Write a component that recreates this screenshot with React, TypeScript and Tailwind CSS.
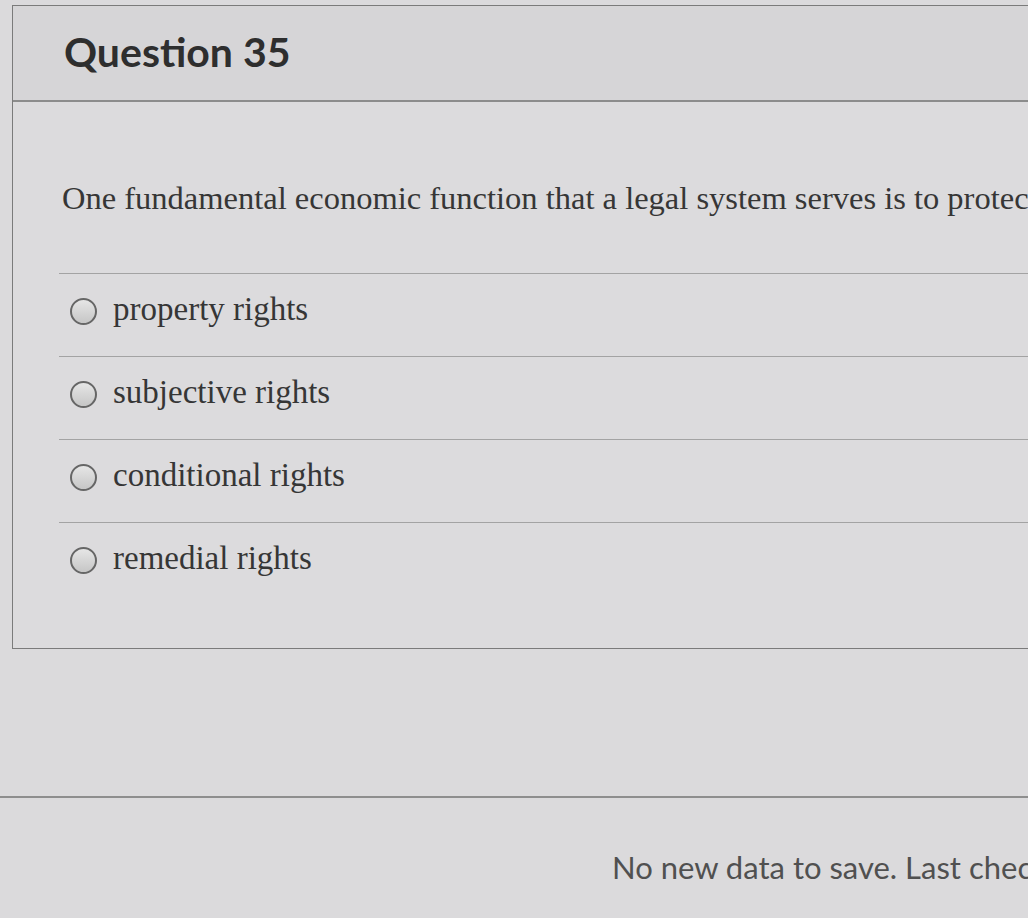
const options = ["property rights", "subjective rights", "conditional rights", "remedial rights"];

function Radio() {
  return (
    <span className="inline-block mt-[6px] w-[27px] h-[27px] shrink-0 rounded-full border-2 border-[#666] bg-gradient-to-b from-[#e6e6e6] to-[#c6c6c6]" />
  );
}

export default function App() {
  return (
    <div className="w-[1028px] h-[918px] overflow-hidden bg-[#dbdadc] pt-[5px]">
      <div className="ml-[12px] w-[1100px] border border-[#7b7b7b] bg-[#dcdbdd]">
        <div className="h-[96px] flex items-center pl-[51px] pb-[3px] bg-[#d6d5d7] border-b-2 border-[#8c8c8c]">
          <h2 className="text-[41px] font-bold text-[#2e2e2e] font-['Lato',sans-serif]">Question 35</h2>
        </div>
        <div className="pt-[77px] pb-[43px] font-['Liberation_Serif',serif] text-[#363636]">
          <p className="pl-[49px] text-[32.5px] leading-[38px] whitespace-nowrap">
            One fundamental economic function that a legal system serves is to protect
          </p>
          <div className="mt-[56px] ml-[46px]">
            {options.map((o) => (
              <div key={o} className="h-[83px] flex items-center gap-[16px] pl-[11px] pb-[13px] border-t border-[#a3a3a3]">
                <Radio />
                <span className="text-[33px] leading-[36px] whitespace-nowrap">{o}</span>
              </div>
            ))}
          </div>
        </div>
      </div>
      <div className="mt-[147px] border-t-2 border-[#8e8e8e]">
        <p className="pt-[46px] pl-[612px] text-[31px] text-[#505050] whitespace-nowrap font-['Lato',sans-serif]">
          No new data to save. Last checked at 10:42am
        </p>
      </div>
    </div>
  );
}
